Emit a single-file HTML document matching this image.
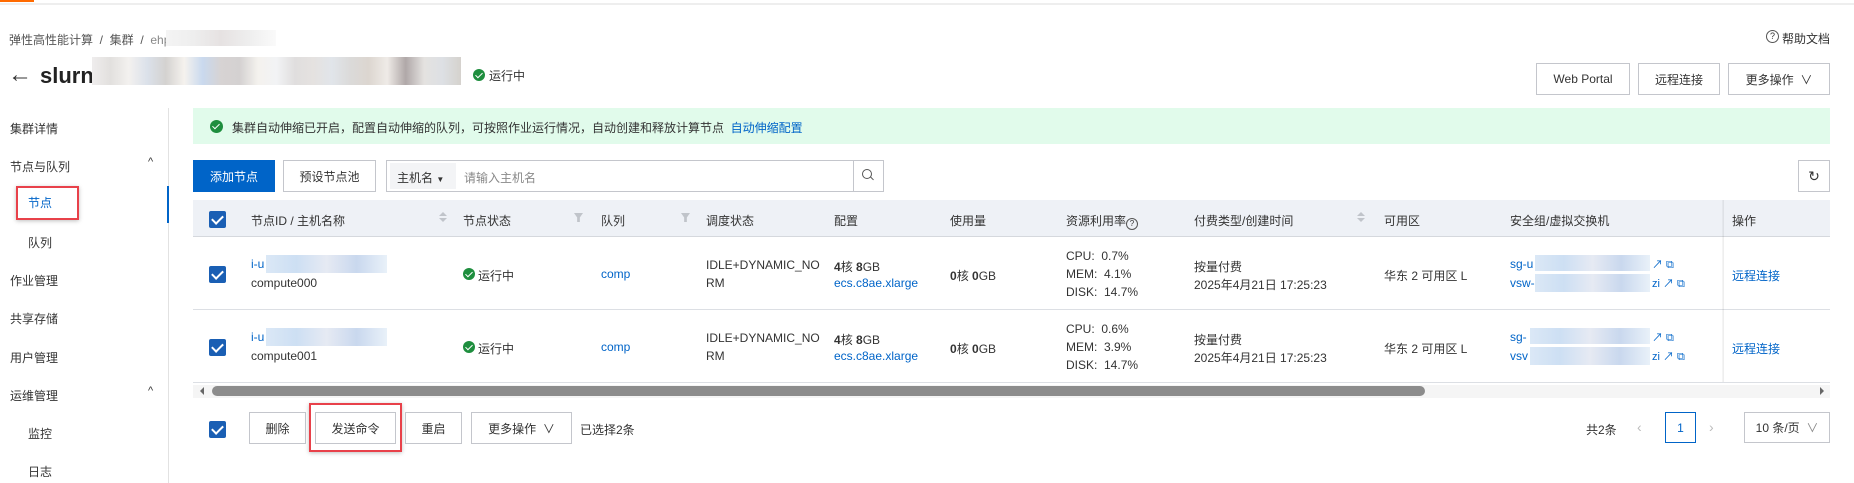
<!DOCTYPE html>
<html><head><meta charset="utf-8"><style>
*{margin:0;padding:0;box-sizing:border-box}
body{width:1854px;height:483px;position:relative;overflow:hidden;background:#fff;font-family:"Liberation Sans","Noto Sans CJK SC",sans-serif;font-size:12px;color:#333}
.a{position:absolute;white-space:nowrap}
.btn{position:absolute;border:1px solid #c4c6cc;background:#fff;display:flex;align-items:center;justify-content:center;color:#333;font-size:12px}
.cb{position:absolute;width:17px;height:17px;background:#1a5fb4;border-radius:2px}
.cb:after{content:"";position:absolute;left:5px;top:2px;width:5px;height:9px;border:solid #fff;border-width:0 2px 2px 0;transform:rotate(45deg)}
.ok{position:absolute;width:12px;height:12px;border-radius:50%;background:#1e8e3e}
.ok:after{content:"";position:absolute;left:4px;top:2px;width:3px;height:6px;border:solid #fff;border-width:0 1.5px 1.5px 0;transform:rotate(45deg)}
.link{color:#0064c8}
.hd{color:#333}
.blur{position:absolute;background:linear-gradient(90deg,#dbe8f6,#cddff3,#e6eaf3,#c9d8ee,#e9f1f9)}
.sort{position:absolute;width:0;height:0;border-left:4px solid transparent;border-right:4px solid transparent}
.line{position:absolute;height:1px;background:#dcdfe4}
</style></head><body>
<div class="a" style="left:0;top:0;width:34px;height:2px;background:#ff6a00"></div>
<div class="a" style="left:0;top:3px;width:1854px;height:2px;background:#eee"></div>

<div class="a" style="left:9px;top:31px;color:#555">弹性高性能计算 &nbsp;/&nbsp; 集群 &nbsp;/&nbsp; <span style="color:#888">ehpc-s</span></div>
<div class="a" style="left:166px;top:30px;width:110px;height:16px;background:linear-gradient(90deg,#f4f4f4,#eee,#e6e2e2,#eee,#fafafa)"></div>
<div class="a" style="left:1766px;top:30px;width:13px;height:13px;border:1px solid #555;border-radius:50%;font-size:9px;text-align:center;line-height:11px">?</div>
<div class="a" style="left:1782px;top:30px">帮助文档</div>

<div class="a" style="left:8px;top:60px;font-size:24px;line-height:30px">←</div>
<div class="a" style="left:40px;top:62px;font-size:22px;font-weight:bold;line-height:28px;color:#222">slurn</div>
<div class="a" style="left:92px;top:57px;width:369px;height:28px;background:linear-gradient(90deg,#efeded,#e2e0de,#f3f1ef,#dbe1ea,#d4d2d0,#f5f2ee,#c9d9ee,#d7d3d3,#d4d1d1,#f4f2ee,#f2f3f5,#e0dede,#e5e2e0,#e1e5ea,#dbdad9,#dcd6d0,#efebe7,#b0a8a8,#e4e2e0,#dde0e4,#d5d2cd)"></div>
<div class="ok" style="left:473px;top:69px"></div>
<div class="a" style="left:489px;top:67px">运行中</div>

<div class="btn" style="left:1536px;top:63px;width:94px;height:32px">Web Portal</div>
<div class="btn" style="left:1638px;top:63px;width:82px;height:32px">远程连接</div>
<div class="btn" style="left:1728px;top:63px;width:102px;height:32px">更多操作 &nbsp;∨</div>

<!-- sidebar -->
<div class="a" style="left:168px;top:108px;width:1px;height:375px;background:#e2e2e2"></div>
<div class="a" style="left:167px;top:186px;width:2px;height:37px;background:#0064c8"></div>
<div class="a" style="left:10px;top:120px">集群详情</div>
<div class="a" style="left:10px;top:158px">节点与队列</div>
<div class="a" style="left:148px;top:156px;font-size:11px">^</div>
<div class="a" style="left:16px;top:186px;width:63px;height:34px;border:2px solid #e8414a;box-shadow:0 1px 4px rgba(0,0,0,.25)"></div>
<div class="a" style="left:28px;top:194px;color:#0064c8">节点</div>
<div class="a" style="left:28px;top:234px">队列</div>
<div class="a" style="left:10px;top:272px">作业管理</div>
<div class="a" style="left:10px;top:310px">共享存储</div>
<div class="a" style="left:10px;top:349px">用户管理</div>
<div class="a" style="left:10px;top:387px">运维管理</div>
<div class="a" style="left:148px;top:385px;font-size:11px">^</div>
<div class="a" style="left:28px;top:425px">监控</div>
<div class="a" style="left:28px;top:463px">日志</div>

<!-- banner -->
<div class="a" style="left:193px;top:108px;width:1637px;height:36px;background:#e1fbeb"></div>
<div class="ok" style="left:210px;top:120px;width:13px;height:13px"></div>
<div class="a" style="left:232px;top:119px">集群自动伸缩已开启，配置自动伸缩的队列，可按照作业运行情况，自动创建和释放计算节点 &nbsp;<span class="link">自动伸缩配置</span></div>

<!-- toolbar -->
<div class="btn" style="left:193px;top:160px;width:82px;height:32px;background:#0064c8;border-color:#0064c8;color:#fff">添加节点</div>
<div class="btn" style="left:283px;top:160px;width:93px;height:32px">预设节点池</div>
<div class="a" style="left:386px;top:160px;width:498px;height:32px;border:1px solid #c4c6cc"></div>
<div class="a" style="left:390px;top:163px;width:66px;height:26px;background:#f3f4f6"></div>
<div class="a" style="left:397px;top:169px">主机名 <span style="font-size:8px">▼</span></div>
<div class="a" style="left:464px;top:169px;color:#888">请输入主机名</div>
<div class="a" style="left:853px;top:161px;width:1px;height:30px;background:#c4c6cc"></div>
<div class="a" style="left:862px;top:169px;width:10px;height:10px;border:1.3px solid #555;border-radius:50%"></div>
<div class="a" style="left:870px;top:178px;width:4px;height:1.3px;background:#555;transform:rotate(45deg)"></div>
<div class="btn" style="left:1798px;top:160px;width:32px;height:32px;font-size:14px">↻</div>

<!-- table -->
<div class="a" style="left:193px;top:200px;width:1637px;height:36px;background:#eef1f6"></div>
<div class="line" style="left:193px;top:236px;width:1637px;background:#d5d8dd"></div>
<div class="line" style="left:193px;top:309px;width:1637px"></div>
<div class="line" style="left:193px;top:382px;width:1637px"></div>
<div class="a" style="left:1722px;top:200px;width:2px;height:182px;background:linear-gradient(90deg,rgba(0,0,0,.03),rgba(0,0,0,.08))"></div>

<div class="cb" style="left:209px;top:211px"></div>
<div class="a hd" style="left:251px;top:212px">节点ID / 主机名称</div>
<div class="sort" style="left:439px;top:212px;border-bottom:4px solid #c0c4ca"></div>
<div class="sort" style="left:439px;top:218px;border-top:4px solid #c0c4ca"></div>
<div class="a hd" style="left:463px;top:212px">节点状态</div>
<div class="a" style="left:574px;top:213px;width:9px;height:9px;background:#c0c4ca;clip-path:polygon(0 0,100% 0,65% 50%,65% 100%,35% 100%,35% 50%)"></div>
<div class="a hd" style="left:601px;top:212px">队列</div>
<div class="a" style="left:681px;top:213px;width:9px;height:9px;background:#c0c4ca;clip-path:polygon(0 0,100% 0,65% 50%,65% 100%,35% 100%,35% 50%)"></div>
<div class="a hd" style="left:706px;top:212px">调度状态</div>
<div class="a hd" style="left:834px;top:212px">配置</div>
<div class="a hd" style="left:950px;top:212px">使用量</div>
<div class="a hd" style="left:1066px;top:212px">资源利用率<span style="display:inline-block;width:12px;height:12px;border:1px solid #555;border-radius:50%;font-size:8px;text-align:center;line-height:10px;vertical-align:-1px">?</span></div>
<div class="a hd" style="left:1194px;top:212px">付费类型/创建时间</div>
<div class="sort" style="left:1357px;top:212px;border-bottom:4px solid #c0c4ca"></div>
<div class="sort" style="left:1357px;top:218px;border-top:4px solid #c0c4ca"></div>
<div class="a hd" style="left:1384px;top:212px">可用区</div>
<div class="a hd" style="left:1510px;top:212px">安全组/虚拟交换机</div>
<div class="a hd" style="left:1732px;top:212px">操作</div>

<!-- row 1 -->
<div class="cb" style="left:209px;top:266px"></div>
<div class="a link" style="left:251px;top:257px">i-u</div>
<div class="blur" style="left:266px;top:255px;width:121px;height:18px"></div>
<div class="a" style="left:251px;top:276px">compute000</div>
<div class="ok" style="left:463px;top:268px"></div>
<div class="a" style="left:478px;top:267px">运行中</div>
<div class="a link" style="left:601px;top:267px">comp</div>
<div class="a" style="left:706px;top:258px">IDLE+DYNAMIC_NO</div>
<div class="a" style="left:706px;top:276px">RM</div>
<div class="a" style="left:834px;top:258px"><b>4</b>核 <b>8</b>GB</div>
<div class="a link" style="left:834px;top:276px">ecs.c8ae.xlarge</div>
<div class="a" style="left:950px;top:267px"><b>0</b>核 <b>0</b>GB</div>
<div class="a" style="left:1066px;top:249px">CPU:&nbsp; 0.7%</div>
<div class="a" style="left:1066px;top:267px">MEM:&nbsp; 4.1%</div>
<div class="a" style="left:1066px;top:285px">DISK:&nbsp; 14.7%</div>
<div class="a" style="left:1194px;top:258px">按量付费</div>
<div class="a" style="left:1194px;top:276px">2025年4月21日 17:25:23</div>
<div class="a" style="left:1384px;top:267px">华东 2 可用区 L</div>
<div class="a link" style="left:1510px;top:257px">sg-u</div>
<div class="blur" style="left:1535px;top:255px;width:115px;height:16px"></div>
<div class="a link" style="left:1510px;top:276px">vsw-</div>
<div class="blur" style="left:1535px;top:274px;width:115px;height:18px"></div>
<div class="a link" style="left:1652px;top:256px;font-size:11px">↗ ⧉</div>
<div class="a link" style="left:1652px;top:275px;font-size:11px">zi ↗ ⧉</div>
<div class="a link" style="left:1732px;top:267px">远程连接</div>

<!-- row 2 -->
<div class="cb" style="left:209px;top:339px"></div>
<div class="a link" style="left:251px;top:330px">i-u</div>
<div class="blur" style="left:266px;top:328px;width:121px;height:18px"></div>
<div class="a" style="left:251px;top:349px">compute001</div>
<div class="ok" style="left:463px;top:341px"></div>
<div class="a" style="left:478px;top:340px">运行中</div>
<div class="a link" style="left:601px;top:340px">comp</div>
<div class="a" style="left:706px;top:331px">IDLE+DYNAMIC_NO</div>
<div class="a" style="left:706px;top:349px">RM</div>
<div class="a" style="left:834px;top:331px"><b>4</b>核 <b>8</b>GB</div>
<div class="a link" style="left:834px;top:349px">ecs.c8ae.xlarge</div>
<div class="a" style="left:950px;top:340px"><b>0</b>核 <b>0</b>GB</div>
<div class="a" style="left:1066px;top:322px">CPU:&nbsp; 0.6%</div>
<div class="a" style="left:1066px;top:340px">MEM:&nbsp; 3.9%</div>
<div class="a" style="left:1066px;top:358px">DISK:&nbsp; 14.7%</div>
<div class="a" style="left:1194px;top:331px">按量付费</div>
<div class="a" style="left:1194px;top:349px">2025年4月21日 17:25:23</div>
<div class="a" style="left:1384px;top:340px">华东 2 可用区 L</div>
<div class="a link" style="left:1510px;top:330px">sg-</div>
<div class="blur" style="left:1530px;top:328px;width:120px;height:16px"></div>
<div class="a link" style="left:1510px;top:349px">vsv</div>
<div class="blur" style="left:1530px;top:347px;width:120px;height:18px"></div>
<div class="a link" style="left:1652px;top:329px;font-size:11px">↗ ⧉</div>
<div class="a link" style="left:1652px;top:348px;font-size:11px">zi ↗ ⧉</div>
<div class="a link" style="left:1732px;top:340px">远程连接</div>

<!-- scrollbar -->
<div class="a" style="left:193px;top:385px;width:1637px;height:13px;background:#f5f5f5"></div>
<div class="a" style="left:200px;top:387px;width:0;height:0;border-top:4px solid transparent;border-bottom:4px solid transparent;border-right:4px solid #666"></div>
<div class="a" style="left:1820px;top:387px;width:0;height:0;border-top:4px solid transparent;border-bottom:4px solid transparent;border-left:4px solid #666"></div>
<div class="a" style="left:212px;top:386px;width:1213px;height:10px;border-radius:5px;background:#8c8c8c"></div>

<!-- bottom -->
<div class="cb" style="left:209px;top:421px"></div>
<div class="btn" style="left:249px;top:412px;width:57px;height:32px">删除</div>
<div class="btn" style="left:315px;top:412px;width:81px;height:32px">发送命令</div>
<div class="a" style="left:309px;top:403px;width:93px;height:49px;border:2px solid #e8414a;box-shadow:0 1px 4px rgba(0,0,0,.25)"></div>
<div class="btn" style="left:405px;top:412px;width:57px;height:32px">重启</div>
<div class="btn" style="left:471px;top:412px;width:101px;height:32px">更多操作 &nbsp;∨</div>
<div class="a" style="left:580px;top:421px">已选择2条</div>

<div class="a" style="left:1586px;top:421px">共2条</div>
<div class="a" style="left:1637px;top:419px;color:#bbb;font-size:14px">‹</div>
<div class="btn" style="left:1665px;top:412px;width:31px;height:31px;border-color:#0064c8;color:#0064c8">1</div>
<div class="a" style="left:1709px;top:419px;color:#bbb;font-size:14px">›</div>
<div class="btn" style="left:1744px;top:412px;width:86px;height:31px">10 条/页 &nbsp;<span style="color:#888">∨</span></div>
</body></html>
